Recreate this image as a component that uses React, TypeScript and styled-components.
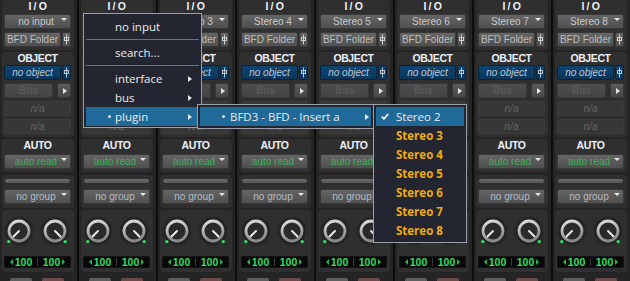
import React from "react";
import styled, { createGlobalStyle } from "styled-components";

const Global = createGlobalStyle`
  html, body { margin: 0; padding: 0; background: #0c0c0c; }
  body { width: 630px; height: 281px; overflow: hidden; }
  * { box-sizing: border-box; }
`;

const Root = styled.div`
  position: relative;
  width: 630px;
  height: 281px;
  overflow: hidden;
  display: flex;
  background: #0c0c0c;
  font-family: "Liberation Sans", Arial, sans-serif;
`;

const Strip = styled.div`
  flex: 0 0 79px;
  width: 79px;
  height: 281px;
  background: #242424;
  border-right: 2px solid #0d0d0d;
  padding: 0 3px 0 2px;
  display: flex;
  flex-direction: column;
`;

const Section = styled.div<{ $mt: number; $pb: number }>`
  margin-top: ${(p) => p.$mt}px;
  padding: 0 3px ${(p) => p.$pb}px 2px;
  background: #2f2f2f;
  border-radius: 4px;
  display: flex;
  flex-direction: column;
`;

const Header = styled.div<{ $mt: number }>`
  margin-top: ${(p) => p.$mt}px;
  height: 11px;
  line-height: 11px;
  text-align: center;
  font-size: 10.5px;
  font-weight: bold;
  letter-spacing: -0.4px;
  color: #eef1fa;
  white-space: pre;
`;

const Row = styled.div<{ $mt: number; $gap: number }>`
  margin-top: ${(p) => p.$mt}px;
  display: flex;
  gap: ${(p) => p.$gap}px;
  height: 15px;
`;

const Button = styled.div<{ $mt?: number; $tone?: "gray" | "blue"; $w?: number }>`
  margin-top: ${(p) => p.$mt ?? 0}px;
  height: 15px;
  flex: ${(p) => (p.$w ? `0 0 ${p.$w}px` : "1 1 auto")};
  display: flex;
  align-items: flex-start;
  border-radius: 2px;
  border: 1px solid ${(p) => (p.$tone === "blue" ? "#07233a" : "#393939")};
  background: ${(p) =>
    p.$tone === "blue"
      ? "linear-gradient(#0f4470, #0b3559)"
      : "linear-gradient(#656565, #4f4f4f)"};
  overflow: hidden;
`;

const Label = styled.span<{ $color?: string; $italic?: boolean; $pr?: number }>`
  flex: 1 1 auto;
  text-align: center;
  font-size: 10px;
  line-height: 13px;
  color: ${(p) => p.$color ?? "#c9c9c9"};
  font-style: ${(p) => (p.$italic ? "italic" : "normal")};
  white-space: nowrap;
  padding-left: ${(p) => p.$pr ?? 0}px;
`;

const Caret = styled.span`
  flex: 0 0 auto;
  margin: 3px 3px 0 0;
  width: 0;
  height: 0;
  border-left: 3px solid transparent;
  border-right: 3px solid transparent;
  border-top: 3px solid #e6e6e6;
`;

const PinWrap = styled.div<{ $tone?: "gray" | "blue" }>`
  flex: 0 0 9px;
  height: 15px;
  display: flex;
  align-items: center;
  justify-content: center;
  border-radius: 2px;
  border: 1px solid ${(p) => (p.$tone === "blue" ? "#07233a" : "#393939")};
  background: ${(p) =>
    p.$tone === "blue"
      ? "linear-gradient(#0f4470, #0b3559)"
      : "linear-gradient(#656565, #4f4f4f)"};
`;

const DisabledButton = styled.div<{ $w: number }>`
  flex: 0 0 ${(p) => p.$w}px;
  height: 15px;
  border-radius: 2px;
  background: linear-gradient(#4d4d4d, #444444);
  border: 1px solid #383838;
  text-align: center;
  font-size: 10px;
  font-weight: bold;
  line-height: 13px;
  color: #595959;
`;

const PlayButton = styled.div`
  flex: 0 0 14px;
  height: 15px;
  border-radius: 2px;
  background: linear-gradient(#5a5a5a, #474747);
  border: 1px solid #383838;
  display: flex;
  align-items: center;
  justify-content: center;
  &::after {
    content: "";
    border-top: 3.5px solid transparent;
    border-bottom: 3.5px solid transparent;
    border-left: 4px solid #e2e2e2;
    margin-left: 2px;
  }
`;

const Slot = styled.div<{ $mt: number }>`
  margin-top: ${(p) => p.$mt}px;
  height: 15px;
  border-radius: 2px;
  background: #373737;
  border: 1px solid #3c3c3c;
  text-align: center;
  font-size: 10px;
  font-style: italic;
  line-height: 13px;
  color: #666;
`;

const GroupBar = styled.div`
  margin: 4px 1px 0 1px;
  height: 4px;
  border-radius: 2px;
  background: linear-gradient(#6a6a6a, #575757);
`;

const KnobRow = styled.div`
  margin-top: 6px;
  display: flex;
  gap: 6px;
  height: 30px;
`;

const PanBox = styled.div`
  margin-top: 10px;
  height: 12px;
  background: #080808;
  border: 1px solid #141414;
  border-radius: 1px;
  display: flex;
  align-items: center;
  font-size: 10.5px;
  font-weight: bold;
  color: #34dc60;
`;

const PanHalf = styled.div`
  flex: 1 1 0;
  display: flex;
  align-items: center;
  justify-content: center;
  gap: 2px;
  line-height: 10px;
`;

const PanDivider = styled.div`
  flex: 0 0 1px;
  height: 8px;
  background: #3a3a3a;
`;

const PanArrow = styled.span<{ $dir: "l" | "r" }>`
  width: 0;
  height: 0;
  border-top: 3px solid transparent;
  border-bottom: 3px solid transparent;
  ${(p) => (p.$dir === "l" ? "border-right: 3px solid #2cb34f;" : "border-left: 3px solid #2cb34f;")}
`;

const BottomRow = styled.div`
  margin-top: 6px;
  padding-left: 8px;
  display: flex;
  gap: 10px;
`;

const BottomButton = styled.div<{ $color: string }>`
  width: 22px;
  height: 14px;
  border-radius: 2px;
  background: ${(p) => p.$color};
`;

/* ---------- Menus ---------- */

const Menu = styled.div<{ $left: number; $top: number; $width: number; $pt: number; $pb: number }>`
  position: absolute;
  left: ${(p) => p.$left}px;
  top: ${(p) => p.$top}px;
  width: ${(p) => p.$width}px;
  padding: ${(p) => p.$pt}px 2px ${(p) => p.$pb}px 2px;
  background: #232631;
  border: 1px solid #9a9ea7;
  font-family: "Open Sans", "Noto Sans", "DejaVu Sans", sans-serif;
  font-size: 11.5px;
  color: #ebebeb;
`;

const MenuItem = styled.div<{ $active?: boolean; $pl: number }>`
  height: 19px;
  display: flex;
  align-items: center;
  padding-left: ${(p) => p.$pl}px;
  background: ${(p) => (p.$active ? "#1f6a98" : "transparent")};
  white-space: nowrap;
`;

const Mark = styled.span<{ $w: number }>`
  flex: 0 0 ${(p) => p.$w}px;
  display: flex;
  align-items: center;
`;

const ItemText = styled.span<{ $gold?: boolean }>`
  flex: 1 1 auto;
  font-weight: ${(p) => (p.$gold ? 700 : 400)};
  color: ${(p) => (p.$gold ? "#efaa10" : "#ebebeb")};
`;

const SubArrow = styled.span<{ $mr: number }>`
  flex: 0 0 auto;
  margin-right: ${(p) => p.$mr}px;
  width: 0;
  height: 0;
  border-top: 3.5px solid transparent;
  border-bottom: 3.5px solid transparent;
  border-left: 4px solid #e6e6e6;
`;

const Separator = styled.div`
  height: 1px;
  margin: 3px 0;
  background: #6e717a;
`;

const Dot = styled.span`
  width: 3px;
  height: 3px;
  border-radius: 50%;
  background: #e6e6e6;
`;

/* ---------- Icons ---------- */

const PinIcon: React.FC<{ color: string }> = ({ color }) => (
  <svg width="7" height="11" viewBox="0 0 7 11">
    <line x1="3.5" y1="0.5" x2="3.5" y2="10.5" stroke={color} strokeWidth="1" />
    <rect x="1.5" y="3.5" width="4" height="3" fill="none" stroke={color} strokeWidth="1" />
  </svg>
);

const Knob: React.FC<{ side: "l" | "r"; id: string }> = ({ side, id }) => {
  const px = side === "l" ? 9.5 : 20.5;
  const dx = side === "l" ? 4.8 : 25.2;
  return (
    <svg width="30" height="30" viewBox="0 0 30 30">
      <defs>
        <radialGradient id={`sh${id}`} cx="50%" cy="50%" r="50%">
          <stop offset="0.6" stopColor="#1a1a1a" />
          <stop offset="1" stopColor="#282828" />
        </radialGradient>
        <linearGradient id={`rg${id}`} x1="0" y1="0" x2="0.3" y2="1">
          <stop offset="0" stopColor="#e0e0e0" />
          <stop offset="1" stopColor="#8a8a8a" />
        </linearGradient>
      </defs>
      <circle cx="15" cy="15" r="14.5" fill={`url(#sh${id})`} />
      <circle cx="15" cy="15" r="10" fill="#2a2a2a" stroke={`url(#rg${id})`} strokeWidth="2.8" />
      <line x1="15" y1="15" x2={px} y2="20.5" stroke="#ededed" strokeWidth="1.9" strokeLinecap="round" />
      <circle cx={dx} cy="25.6" r="1.7" fill="#2fe05c" />
    </svg>
  );
};

const Check = () => (
  <svg width="8" height="7" viewBox="0 0 8 7">
    <polyline points="0.8,3.6 3,5.8 7.2,1" fill="none" stroke="#f2f2f2" strokeWidth="1.8" />
  </svg>
);

/* ---------- Data ---------- */

const inputs = ["no input", "Stereo 2", "Stereo 3", "Stereo 4", "Stereo 5", "Stereo 6", "Stereo 7", "Stereo 8"];

const ChannelStrip: React.FC<{ input: string; idx: number }> = ({ input, idx }) => (
  <Strip>
    <Section $mt={0} $pb={3}>
      <Header $mt={1}>{"I / O"}</Header>
      <Button $mt={2}>
        <Label $pr={6}>{input}</Label>
        <Caret />
      </Button>
      <Row $mt={3} $gap={1}>
        <Button $w={57}>
          <Label $color="#bdbdbd">BFD Folder</Label>
        </Button>
        <PinWrap>
          <PinIcon color="#cfcfcf" />
        </PinWrap>
      </Row>
    </Section>
    <Section $mt={2} $pb={3}>
      <Header $mt={1}>OBJECT</Header>
      <Row $mt={1} $gap={1}>
        <Button $w={57} $tone="blue">
          <Label $italic $color="#b9c6d3">no object</Label>
        </Button>
        <PinWrap $tone="blue">
          <PinIcon color="#b9c6d3" />
        </PinWrap>
      </Row>
      <Row $mt={3} $gap={4}>
        <DisabledButton $w={49}>Bus</DisabledButton>
        <PlayButton />
      </Row>
      <Slot $mt={3}>n/a</Slot>
      <Slot $mt={3}>n/a</Slot>
    </Section>
    <Section $mt={2} $pb={3}>
      <Header $mt={1}>AUTO</Header>
      <Button $mt={3}>
        <Label $pr={6} $color="#39b257">auto read</Label>
        <Caret />
      </Button>
    </Section>
    <Section $mt={3} $pb={4}>
      <GroupBar />
      <Button $mt={6}>
        <Label $pr={6} $color="#b3bcc6">no group</Label>
        <Caret />
      </Button>
    </Section>
    <Section $mt={2} $pb={4}>
      <KnobRow>
        <Knob side="l" id={`${idx}l`} />
        <Knob side="r" id={`${idx}r`} />
      </KnobRow>
      <PanBox>
        <PanHalf>
          <PanArrow $dir="l" />
          <span>100</span>
        </PanHalf>
        <PanDivider />
        <PanHalf>
          <span>100</span>
          <PanArrow $dir="r" />
        </PanHalf>
      </PanBox>
    </Section>
    <BottomRow>
      <BottomButton $color="#5e5e5e" />
      <BottomButton $color="#6c4b4b" />
    </BottomRow>
  </Strip>
);

export default function App() {
  return (
    <Root>
      <Global />
      {inputs.map((inp, i) => (
        <ChannelStrip key={i} input={inp} idx={i} />
      ))}

      <Menu $left={83} $top={13} $width={119} $pt={3} $pb={1}>
        <MenuItem $pl={29}>
          <ItemText>no input</ItemText>
        </MenuItem>
        <Separator />
        <MenuItem $pl={29}>
          <ItemText>search...</ItemText>
        </MenuItem>
        <Separator />
        <MenuItem $pl={29}>
          <ItemText>interface</ItemText>
          <SubArrow $mr={7} />
        </MenuItem>
        <MenuItem $pl={29}>
          <ItemText>bus</ItemText>
          <SubArrow $mr={7} />
        </MenuItem>
        <MenuItem $pl={22} $active>
          <Mark $w={7}>
            <Dot />
          </Mark>
          <ItemText>plugin</ItemText>
          <SubArrow $mr={7} />
        </MenuItem>
      </Menu>

      <Menu $left={197} $top={104} $width={177} $pt={2} $pb={2}>
        <MenuItem $pl={22} $active>
          <Mark $w={8}>
            <Dot />
          </Mark>
          <ItemText>BFD3 - BFD - Insert a</ItemText>
          <SubArrow $mr={2} />
        </MenuItem>
      </Menu>

      <Menu $left={373} $top={104} $width={94} $pt={2} $pb={2}>
        <MenuItem $pl={5} $active>
          <Mark $w={15}>
            <Check />
          </Mark>
          <ItemText>Stereo 2</ItemText>
        </MenuItem>
        {["Stereo 3", "Stereo 4", "Stereo 5", "Stereo 6", "Stereo 7", "Stereo 8"].map((s) => (
          <MenuItem key={s} $pl={20}>
            <ItemText $gold>{s}</ItemText>
          </MenuItem>
        ))}
      </Menu>
    </Root>
  );
}
